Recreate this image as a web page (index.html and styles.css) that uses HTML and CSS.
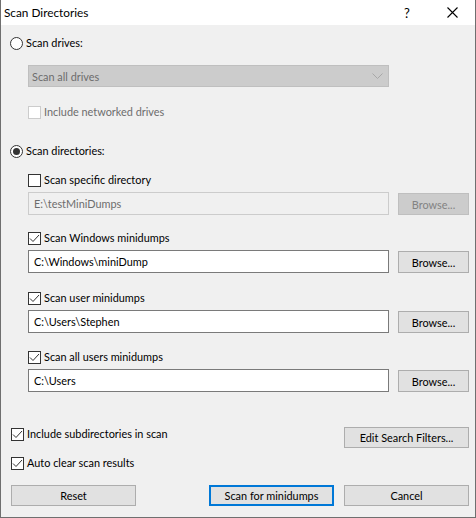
FILE: index.html
```html
<!DOCTYPE html>
<html>
<head>
<meta charset="utf-8">
<link rel="stylesheet" href="styles.css">
</head>
<body>
<div class="window">
  <div class="titlebar">
    <span class="title">Scan Directories</span>
    <span class="help">?</span>
    <svg class="close" width="11" height="11" viewBox="0 0 11 11"><path d="M0.5 0.5 L10.5 10.5 M10.5 0.5 L0.5 10.5" stroke="#000" stroke-width="1.1" fill="none"/></svg>
  </div>
  <div class="content">
    <div class="row radio-row r-drives">
      <span class="radio"></span><span>Scan drives:</span>
    </div>
    <div class="indent">
      <div class="combo"><span>Scan all drives</span>
        <svg width="11" height="6" viewBox="0 0 11 6"><path d="M0.5 0.5 L5.5 5.5 L10.5 0.5" stroke="#a8a8a8" fill="none"/></svg>
      </div>
      <div class="row check-row disabled r-net">
        <span class="check"></span><span>Include networked drives</span>
      </div>
    </div>
    <div class="row radio-row r-dirs">
      <span class="radio on"></span><span>Scan directories:</span>
    </div>
    <div class="indent">
      <div class="row check-row r-first">
        <span class="check"></span><span>Scan specific directory</span>
      </div>
      <div class="field-row">
        <div class="field disabled">E:\testMiniDumps</div>
        <div class="btn disabled">Browse...</div>
      </div>

      <div class="row check-row r-g2">
        <span class="check on"><svg width="11" height="11" viewBox="0 0 11 11"><path d="M1 5.5 L4 8.5 L10 2" stroke="#333" stroke-width="1" fill="none"/></svg></span><span>Scan Windows minidumps</span>
      </div>
      <div class="field-row">
        <div class="field">C:\Windows\miniDump</div>
        <div class="btn">Browse...</div>
      </div>

      <div class="row check-row r-g3">
        <span class="check on"><svg width="11" height="11" viewBox="0 0 11 11"><path d="M1 5.5 L4 8.5 L10 2" stroke="#333" stroke-width="1" fill="none"/></svg></span><span>Scan user minidumps</span>
      </div>
      <div class="field-row">
        <div class="field">C:\Users\Stephen</div>
        <div class="btn">Browse...</div>
      </div>

      <div class="row check-row r-g4">
        <span class="check on"><svg width="11" height="11" viewBox="0 0 11 11"><path d="M1 5.5 L4 8.5 L10 2" stroke="#333" stroke-width="1" fill="none"/></svg></span><span>Scan all users minidumps</span>
      </div>
      <div class="field-row">
        <div class="field">C:\Users</div>
        <div class="btn">Browse...</div>
      </div>
    </div>

    <div class="opts-row">
      <div class="row check-row outer">
        <span class="check on"><svg width="11" height="11" viewBox="0 0 11 11"><path d="M1 5.5 L4 8.5 L10 2" stroke="#333" stroke-width="1" fill="none"/></svg></span><span>Include subdirectories in scan</span>
      </div>
      <div class="btn wide edit">Edit Search Filters...</div>
    </div>
    <div class="row check-row outer r-auto">
      <span class="check on"><svg width="11" height="11" viewBox="0 0 11 11"><path d="M1 5.5 L4 8.5 L10 2" stroke="#333" stroke-width="1" fill="none"/></svg></span><span>Auto clear scan results</span>
    </div>
    <div class="buttons">
      <div class="btn wide">Reset</div>
      <div class="btn wide default">Scan for minidumps</div>
      <div class="btn wide">Cancel</div>
    </div>
  </div>
</div>
</body>
</html>
```

FILE: styles.css
```css
* { box-sizing: border-box; }
html, body { margin: 0; padding: 0; background: #f0f0f0; }
body {
  font-family: Lato, "Noto Sans", "DejaVu Sans", sans-serif;
  font-size: 10.9px;
  color: #000;
}
.window {
  width: 476px;
  height: 518px;
  background: #f0f0f0;
  border: 1px solid #6f6f6f;
  border-top: none;
  display: flex;
  flex-direction: column;
}
.titlebar {
  height: 25px;
  background: #fff;
  display: flex;
  align-items: center;
  padding-left: 3px;
}
.title { flex: 1; line-height: 16px; font-size: 11.8px; }
.help { width: 13px; font-size: 13px; margin-right: 30px; line-height: 16px; }
.close { margin-right: 17px; }

.content {
  flex: 1;
  padding: 10px 6px 0 9px;
  display: flex;
  flex-direction: column;
}
.row {
  display: flex;
  align-items: center;
  height: 16px;
  line-height: 16px;
  white-space: nowrap;
}
.radio {
  width: 13px; height: 13px;
  border: 1px solid #333;
  border-radius: 50%;
  background: #fff;
  margin-right: 3px;
  position: relative;
  flex: none;
}
.radio.on::after {
  content: "";
  position: absolute;
  left: 2px; top: 2px;
  width: 7px; height: 7px;
  border-radius: 50%;
  background: #333;
}
.check {
  width: 13px; height: 13px;
  border: 1px solid #333;
  background: #fff;
  margin-right: 3px;
  flex: none;
  display: flex;
  align-items: center;
  justify-content: center;
}
.check-row.disabled { color: #6d6d6d; }
.check-row.disabled .check { border-color: #cccccc; }

.r-dirs { margin-top: 23px; }
.indent { padding-left: 18px; display: flex; flex-direction: column; }

.combo {
  margin-top: 14px;
  width: 361px;
  height: 22px;
  background: #cccccc;
  border: 1px solid #bfbfbf;
  color: #6d6d6d;
  display: flex;
  align-items: center;
  justify-content: space-between;
  padding: 0 5px 0 3px;
}
.r-net { margin-top: 17px; }
.r-first { margin-top: 13px; }
.r-g2 { margin-top: 15px; }
.r-g3 { margin-top: 17px; }
.r-g4 { margin-top: 16px; }

.field-row {
  display: flex;
  align-items: flex-start;
  gap: 9px;
  margin-top: 4px;
}
.field {
  width: 361px;
  height: 23px;
  border: 1px solid #7a7a7a;
  background: #fff;
  padding: 0 5px;
  line-height: 21px;
  white-space: nowrap;
}
.field.disabled {
  background: #f0f0f0;
  border-color: #cccccc;
  color: #6d6d6d;
}
.btn {
  width: 71px;
  height: 22px;
  margin-top: 1px;
  border: 1px solid #adadad;
  background: #e1e1e1;
  display: flex;
  align-items: center;
  justify-content: center;
  white-space: nowrap;
}
.btn.disabled {
  background: #cccccc;
  border-color: #bfbfbf;
  color: #838383;
}
.btn.wide { width: 125px; height: 21px; margin-top: 0; }
.btn.default { border: 2px solid #0078d7; }

.opts-row {
  margin-top: 34px;
  display: flex;
  align-items: flex-start;
  justify-content: space-between;
  padding-left: 1px;
}
.opts-row .edit { margin-top: 1px; }
.r-auto { margin-top: 7px; margin-left: 1px; }
.buttons {
  margin-top: 14px;
  display: flex;
  padding-left: 1px;
}
.buttons .btn:nth-child(2) { margin-left: 73px; }
.buttons .btn:nth-child(3) { margin-left: 10px; }
```
